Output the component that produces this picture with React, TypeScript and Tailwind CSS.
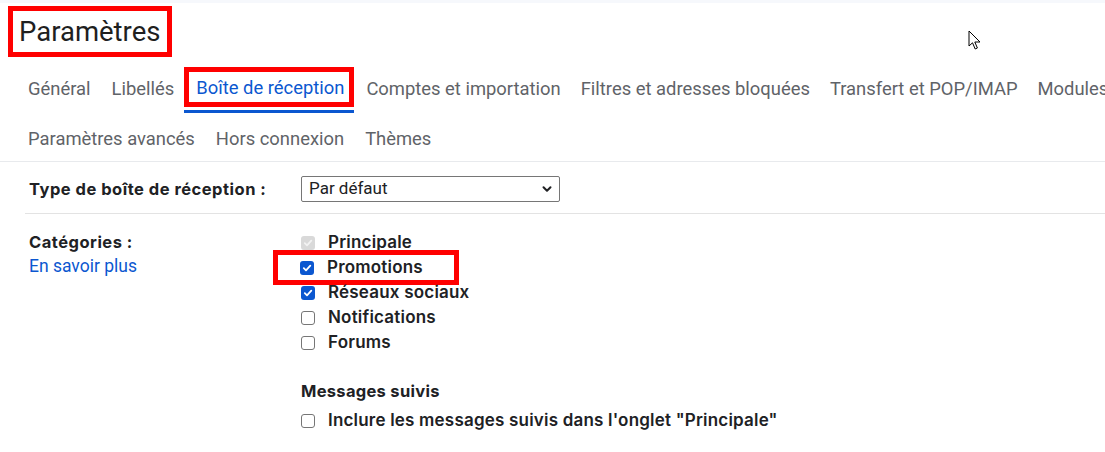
import React from 'react';

const tabsRow1 = ['Général', 'Libellés'];
const tabsRow1b = ['Comptes et importation', 'Filtres et adresses bloquées', 'Transfert et POP/IMAP', 'Modules'];
const tabsRow2 = ['Paramètres avancés', 'Hors connexion', 'Thèmes'];

type BoxState = 'disabled' | 'checked' | 'unchecked';

const Check: React.FC<{ state: BoxState }> = ({ state }) => {
  if (state === 'unchecked') {
    return <span className="block w-[14px] h-[14px] rounded-[3px] border border-[#767676] bg-white shrink-0" />;
  }
  const bg = state === 'checked' ? 'bg-[#0b57d0]' : 'bg-[#d9d9d9]';
  const stroke = state === 'checked' ? '#ffffff' : '#f2f2f2';
  return (
    <span className={`flex items-center justify-center w-[14px] h-[14px] rounded-[3px] shrink-0 ${bg}`}>
      <svg width="10" height="10" viewBox="0 0 10 10" fill="none">
        <path d="M1.8 5.2 L4 7.3 L8.3 2.6" stroke={stroke} strokeWidth="1.8" strokeLinecap="round" strokeLinejoin="round" />
      </svg>
    </span>
  );
};

const categories: { label: string; state: BoxState }[] = [
  { label: 'Principale', state: 'disabled' },
  { label: 'Promotions', state: 'checked' },
  { label: 'Réseaux sociaux', state: 'checked' },
  { label: 'Notifications', state: 'unchecked' },
  { label: 'Forums', state: 'unchecked' },
];

const labelFont = { fontFamily: 'Inter, "Open Sans", sans-serif' };

const App: React.FC = () => {
  return (
    <div className="relative w-[1105px] h-[452px] overflow-hidden bg-white" style={{ fontFamily: 'Roboto, "Noto Sans", sans-serif' }}>
      <div className="h-[3px] bg-[#f6f8fc]" />

      {/* Title */}
      <div className="pl-[8px] pt-[3px]">
        <div className="inline-flex items-center h-[51px] w-[164px] border-[5px] border-[#ff0000] pl-[6px]">
          <h1 className="text-[27.5px] leading-none text-[#1f1f1f]">Paramètres</h1>
        </div>
      </div>

      {/* Tabs row 1 */}
      <div className="flex items-start mt-[10px] pl-[28px] whitespace-nowrap text-[18.4px] text-[#5f6368]">
        {tabsRow1.map((t, i) => (
          <div key={t} className={`h-[42px] pt-[2px] flex items-center ${i === 0 ? 'mr-[21px]' : 'mr-[10px]'}`}>{t}</div>
        ))}
        <div className="flex flex-col">
          <div className="h-[40px] flex items-center border-[5px] border-[#ff0000] pl-[7px] pr-[5px] text-[#0b57d0]">
            <span className="pt-[2px]">Boîte de réception</span>
          </div>
          <div className="mt-[3px] h-[3px] bg-[#0b57d0]" />
        </div>
        {tabsRow1b.map((t, i) => (
          <div key={t} className={`h-[42px] pt-[2px] flex items-center ${i === 0 ? 'ml-[12px]' : 'ml-[20px]'}`}>{t}</div>
        ))}
      </div>

      {/* Tabs row 2 */}
      <div className="flex items-center gap-[21px] h-[36px] mt-[8px] pl-[28px] whitespace-nowrap text-[18.4px] text-[#5f6368]">
        {tabsRow2.map((t) => (
          <div key={t}>{t}</div>
        ))}
      </div>

      <div className="mt-[4px] h-px bg-[#e8eaed]" />

      {/* Inbox type */}
      <div className="ml-[25px] border-b border-[#e3e3e3]">
        <div className="flex items-center h-[51px] pl-[4px] pt-[3px]">
          <div className="w-[272px] text-[16.5px] font-bold tracking-[0.5px] text-[#202124]" style={labelFont}>
            Type de boîte de réception :
          </div>
          <div className="flex items-center justify-between w-[259px] h-[26px] border border-[#767676] rounded-[2px] pl-[7px] pr-[6px] text-[17px] text-[#202124]">
            <span>Par défaut</span>
            <svg width="12" height="12" viewBox="0 0 12 12" fill="none">
              <path d="M2.5 4.2 L6 7.7 L9.5 4.2" stroke="#202124" strokeWidth="2" strokeLinecap="round" strokeLinejoin="round" />
            </svg>
          </div>
        </div>
      </div>

      {/* Categories */}
      <div className="flex pl-[29px] pt-[16px]" style={labelFont}>
        <div className="w-[272px]">
          <div className="h-[25px] flex items-center text-[16.5px] font-bold tracking-[0.5px] text-[#202124]">Catégories :</div>
          <div className="h-[22px] flex items-center text-[17.5px] text-[#0b57d0]" style={{ fontFamily: 'Roboto, sans-serif' }}>
            En savoir plus
          </div>
        </div>
        <div className="flex flex-col">
          {categories.map((c) => {
            const row = (
              <div className="h-[25px] flex items-center gap-[13px]">
                <Check state={c.state} />
                <span className="text-[17px] font-semibold tracking-[0.2px] text-[#202124]">{c.label}</span>
              </div>
            );
            if (c.label === 'Promotions') {
              return (
                <div key={c.label} className="-ml-[28px] -my-[5px] w-[186px] h-[35px] border-[5px] border-[#ff0000] pl-[22px] flex items-center">
                  {row}
                </div>
              );
            }
            return <div key={c.label}>{row}</div>;
          })}

          <div className="mt-[24px] h-[25px] flex items-center text-[16.5px] font-bold tracking-[0.3px] text-[#202124]">Messages suivis</div>
          <div className="mt-[4px] h-[25px] flex items-center gap-[13px]">
            <Check state="unchecked" />
            <span className="text-[17px] font-semibold tracking-[0.2px] text-[#202124]">Inclure les messages suivis dans l'onglet "Principale"</span>
          </div>
        </div>
      </div>

      {/* Mouse cursor */}
      <svg className="absolute left-[968px] top-[30px]" width="14" height="21" viewBox="0 0 14 21" fill="none">
        <path d="M1 1 L1 16 L4.5 12.8 L7.2 19 L9.4 18 L6.8 12 L12 12 Z" fill="#ffffff" stroke="#000000" strokeWidth="1" strokeLinejoin="round" />
      </svg>
    </div>
  );
};

export default App;
